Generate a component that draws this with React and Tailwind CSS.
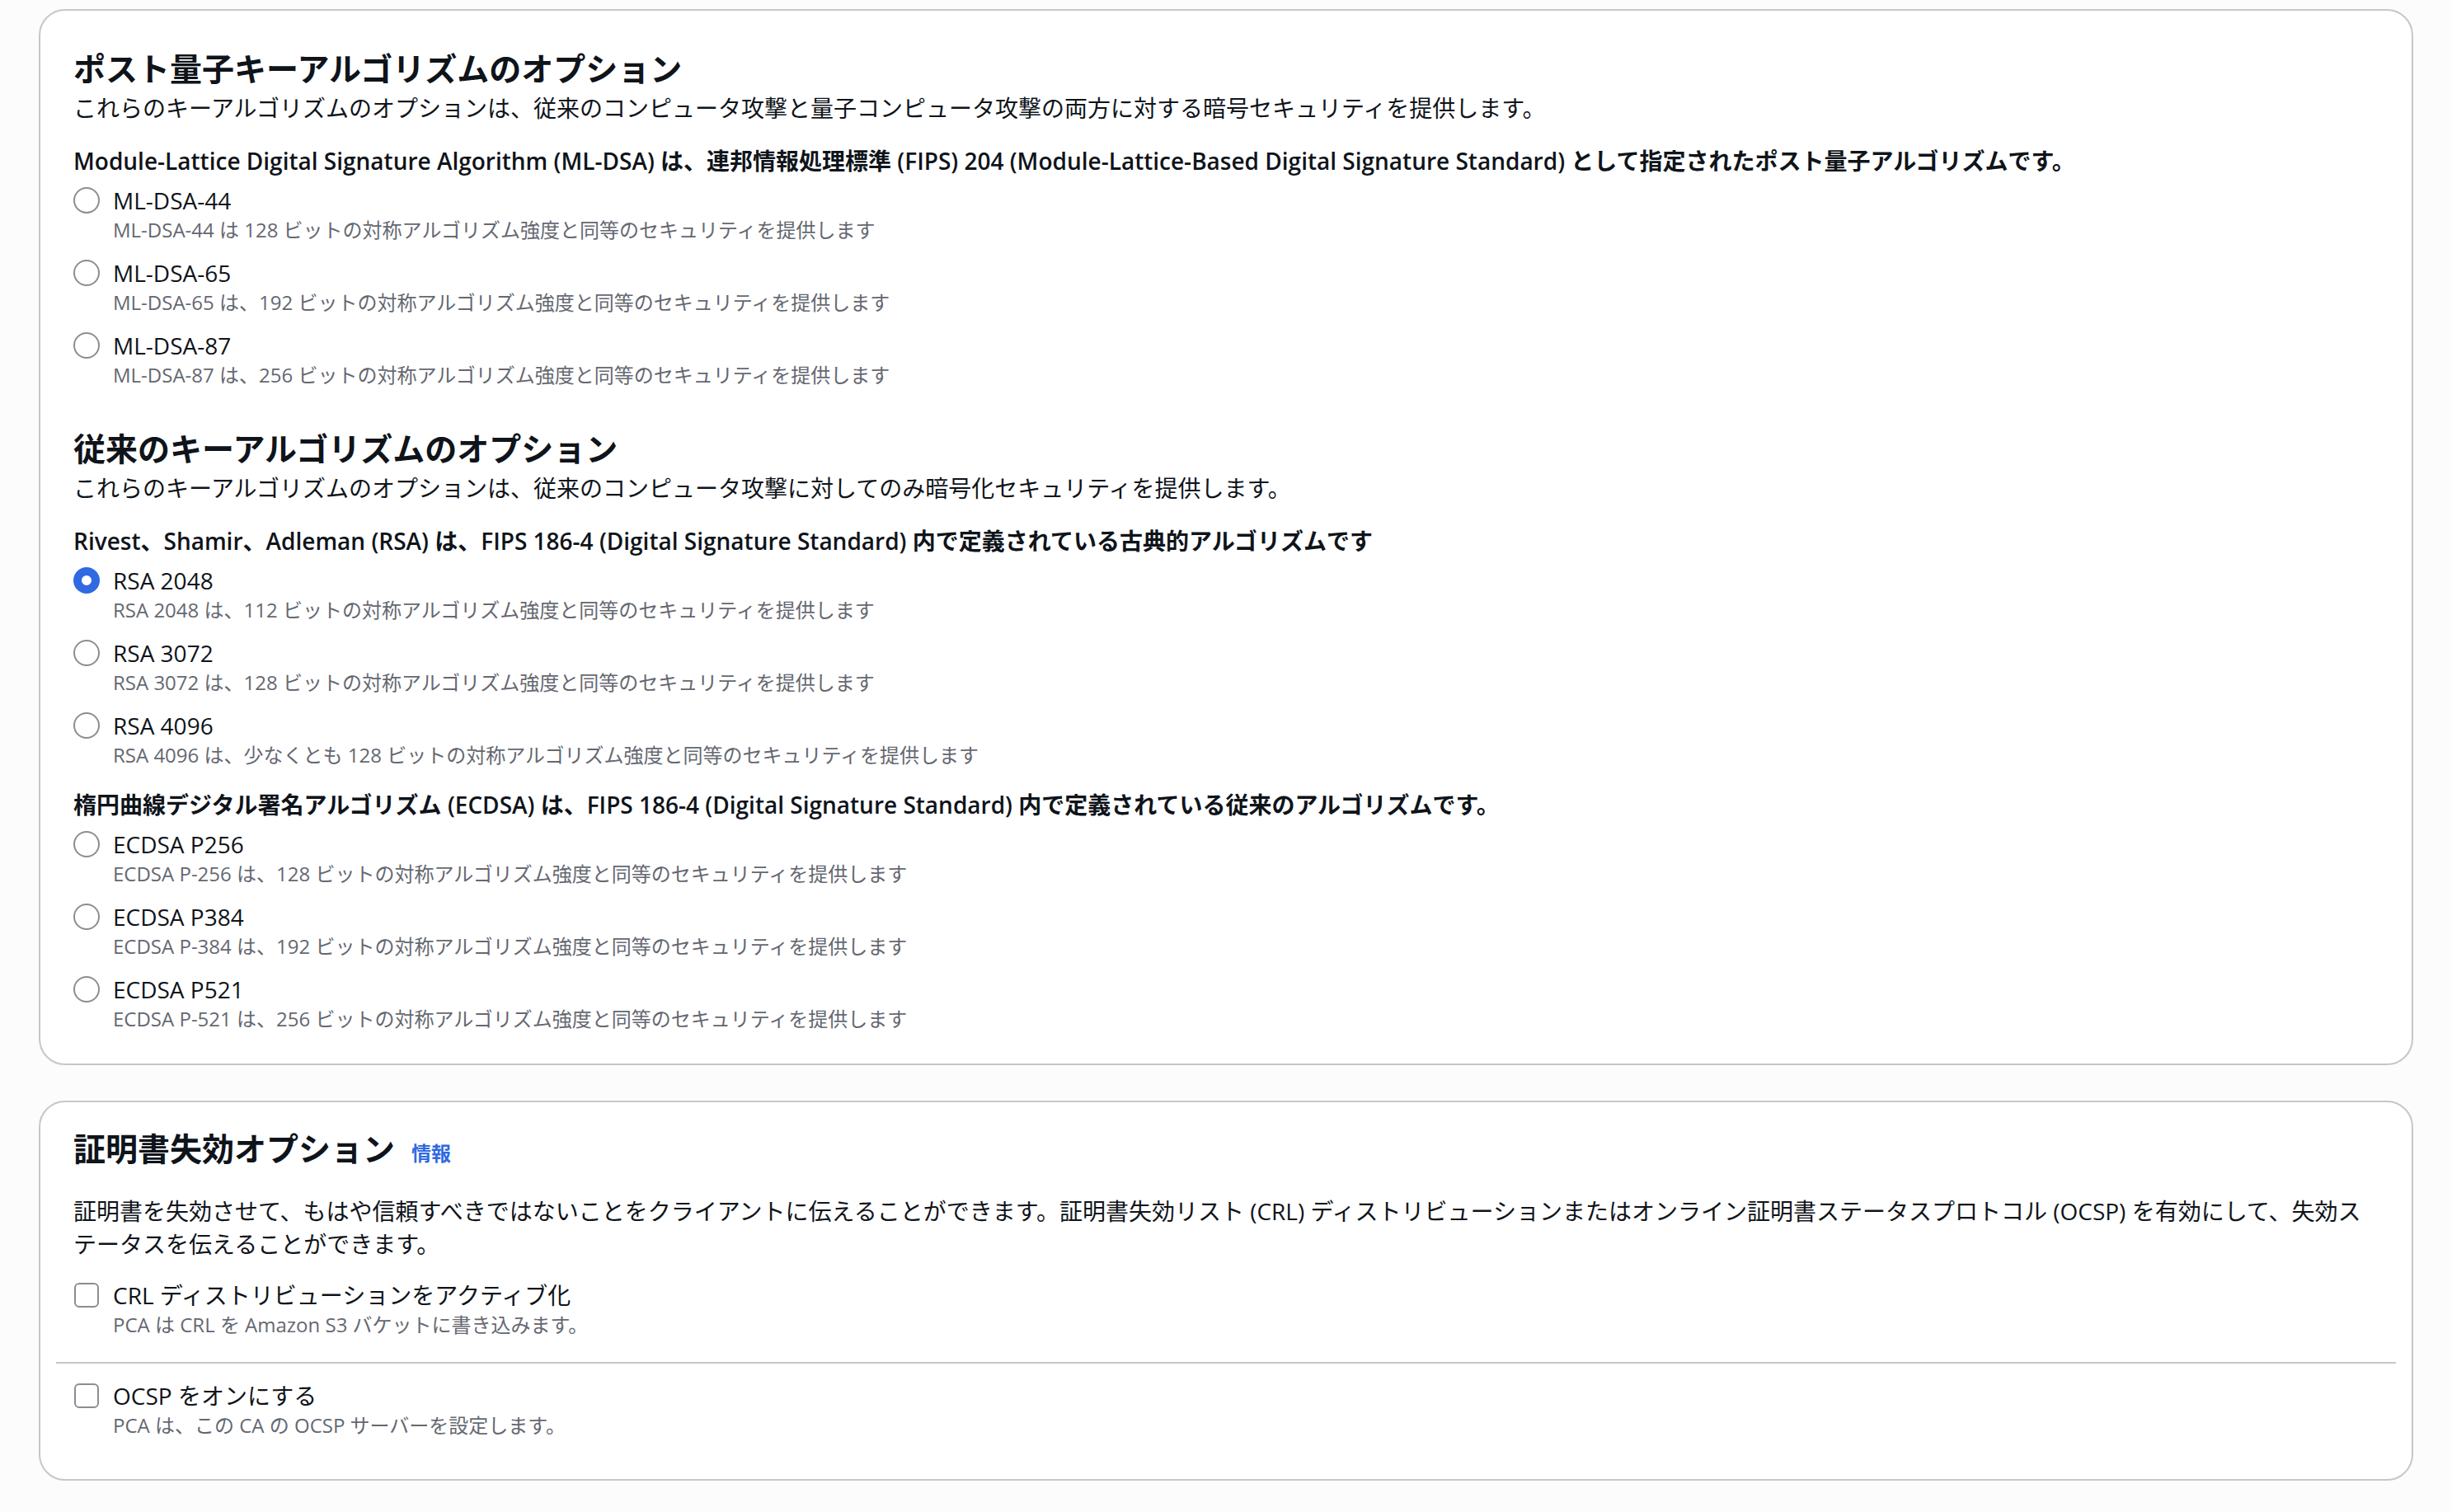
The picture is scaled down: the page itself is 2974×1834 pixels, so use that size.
import React from 'react';

const Radio = ({ label, desc, checked }) => (
  <div className="flex flex-col">
    <div className="flex items-center h-[40px]">
      {checked ? (
        <span className="w-8 h-8 shrink-0 rounded-full border-[10px] border-[#2f6ae3] bg-white" />
      ) : (
        <span className="w-8 h-8 shrink-0 rounded-full border-2 border-[#8c8c94] bg-white" />
      )}
      <span className="ml-4 text-[28px] leading-[40px] text-[#0f141a]">{label}</span>
    </div>
    <div className="pl-12 text-[24px] leading-[32px] text-[#656871]">{desc}</div>
  </div>
);

const Checkbox = ({ label, desc }) => (
  <div className="flex flex-col">
    <div className="flex items-center h-[40px]">
      <span className="w-[30px] h-[30px] ml-[1px] shrink-0 rounded-[6px] border-2 border-[#8c8c94] bg-white" />
      <span className="ml-[17px] text-[28px] leading-[40px] text-[#0f141a]">{label}</span>
    </div>
    <div className="pl-12 text-[24px] leading-[32px] text-[#656871]">{desc}</div>
  </div>
);

const pqOptions = [
  { label: 'ML-DSA-44', desc: 'ML-DSA-44 は 128 ビットの対称アルゴリズム強度と同等のセキュリティを提供します' },
  { label: 'ML-DSA-65', desc: 'ML-DSA-65 は、192 ビットの対称アルゴリズム強度と同等のセキュリティを提供します' },
  { label: 'ML-DSA-87', desc: 'ML-DSA-87 は、256 ビットの対称アルゴリズム強度と同等のセキュリティを提供します' },
];

const rsaOptions = [
  { label: 'RSA 2048', desc: 'RSA 2048 は、112 ビットの対称アルゴリズム強度と同等のセキュリティを提供します', checked: true },
  { label: 'RSA 3072', desc: 'RSA 3072 は、128 ビットの対称アルゴリズム強度と同等のセキュリティを提供します' },
  { label: 'RSA 4096', desc: 'RSA 4096 は、少なくとも 128 ビットの対称アルゴリズム強度と同等のセキュリティを提供します' },
];

const ecdsaOptions = [
  { label: 'ECDSA P256', desc: 'ECDSA P-256 は、128 ビットの対称アルゴリズム強度と同等のセキュリティを提供します' },
  { label: 'ECDSA P384', desc: 'ECDSA P-384 は、192 ビットの対称アルゴリズム強度と同等のセキュリティを提供します' },
  { label: 'ECDSA P521', desc: 'ECDSA P-521 は、256 ビットの対称アルゴリズム強度と同等のセキュリティを提供します' },
];

const RadioGroup = ({ options, className }) => (
  <div className={`flex flex-col gap-4 ${className}`}>
    {options.map((o) => (
      <Radio key={o.label} {...o} />
    ))}
  </div>
);

export default function App() {
  return (
    <div className="min-h-screen bg-[#fcfcfc] px-[47px] pt-[11px] pb-[39px] font-['Open_Sans','Noto_Sans_CJK_JP',sans-serif] text-[#0f141a]">
      {/* key algorithm card */}
      <div className="bg-white border-2 border-[#c6c6cd] rounded-[32px] px-10 pt-[46px] pb-[38px]">
        <h2 className="text-[39px] leading-[48px] font-bold">ポスト量子キーアルゴリズムのオプション</h2>
        <p className="mt-1 text-[28px] leading-[40px]">
          これらのキーアルゴリズムのオプションは、従来のコンピュータ攻撃と量子コンピュータ攻撃の両方に対する暗号セキュリティを提供します。
        </p>
        <p className="mt-6 text-[28px] leading-[40px] font-semibold">
          Module-Lattice Digital Signature Algorithm (ML-DSA) は、連邦情報処理標準 (FIPS) 204 (Module-Lattice-Based Digital Signature Standard) として指定されたポスト量子アルゴリズムです。
        </p>
        <RadioGroup options={pqOptions} className="mt-2" />

        <h2 className="mt-[49px] text-[39px] leading-[48px] font-bold">従来のキーアルゴリズムのオプション</h2>
        <p className="mt-1 text-[28px] leading-[40px]">
          これらのキーアルゴリズムのオプションは、従来のコンピュータ攻撃に対してのみ暗号化セキュリティを提供します。
        </p>
        <p className="mt-6 text-[28px] leading-[40px] font-semibold">
          Rivest、Shamir、Adleman (RSA) は、FIPS 186-4 (Digital Signature Standard) 内で定義されている古典的アルゴリズムです
        </p>
        <RadioGroup options={rsaOptions} className="mt-2" />

        <p className="mt-6 text-[28px] leading-[40px] font-semibold">
          楕円曲線デジタル署名アルゴリズム (ECDSA) は、FIPS 186-4 (Digital Signature Standard) 内で定義されている従来のアルゴリズムです。
        </p>
        <RadioGroup options={ecdsaOptions} className="mt-2" />
      </div>

      {/* revocation card */}
      <div className="mt-[43px] bg-white border-2 border-[#c6c6cd] rounded-[32px] px-10 pt-[32px] pb-[49px]">
        <div className="flex items-baseline">
          <h2 className="text-[39px] leading-[48px] font-bold">証明書失効オプション</h2>
          <a href="#" className="ml-5 text-[24px] font-bold text-[#2f6ae3]">情報</a>
        </div>
        <p className="mt-8 text-[28px] leading-[40px]">
          証明書を失効させて、もはや信頼すべきではないことをクライアントに伝えることができます。証明書失効リスト (CRL) ディストリビューションまたはオンライン証明書ステータスプロトコル (OCSP) を有効にして、失効ステータスを伝えることができます。
        </p>
        <div className="mt-[22px]">
          <Checkbox label="CRL ディストリビューションをアクティブ化" desc="PCA は CRL を Amazon S3 バケットに書き込みます。" />
        </div>
        <div className="mt-[29px] -mx-[21px] h-[2px] bg-[#c6c6cd]" />
        <div className="mt-[19px]">
          <Checkbox label="OCSP をオンにする" desc="PCA は、この CA の OCSP サーバーを設定します。" />
        </div>
      </div>
    </div>
  );
}
